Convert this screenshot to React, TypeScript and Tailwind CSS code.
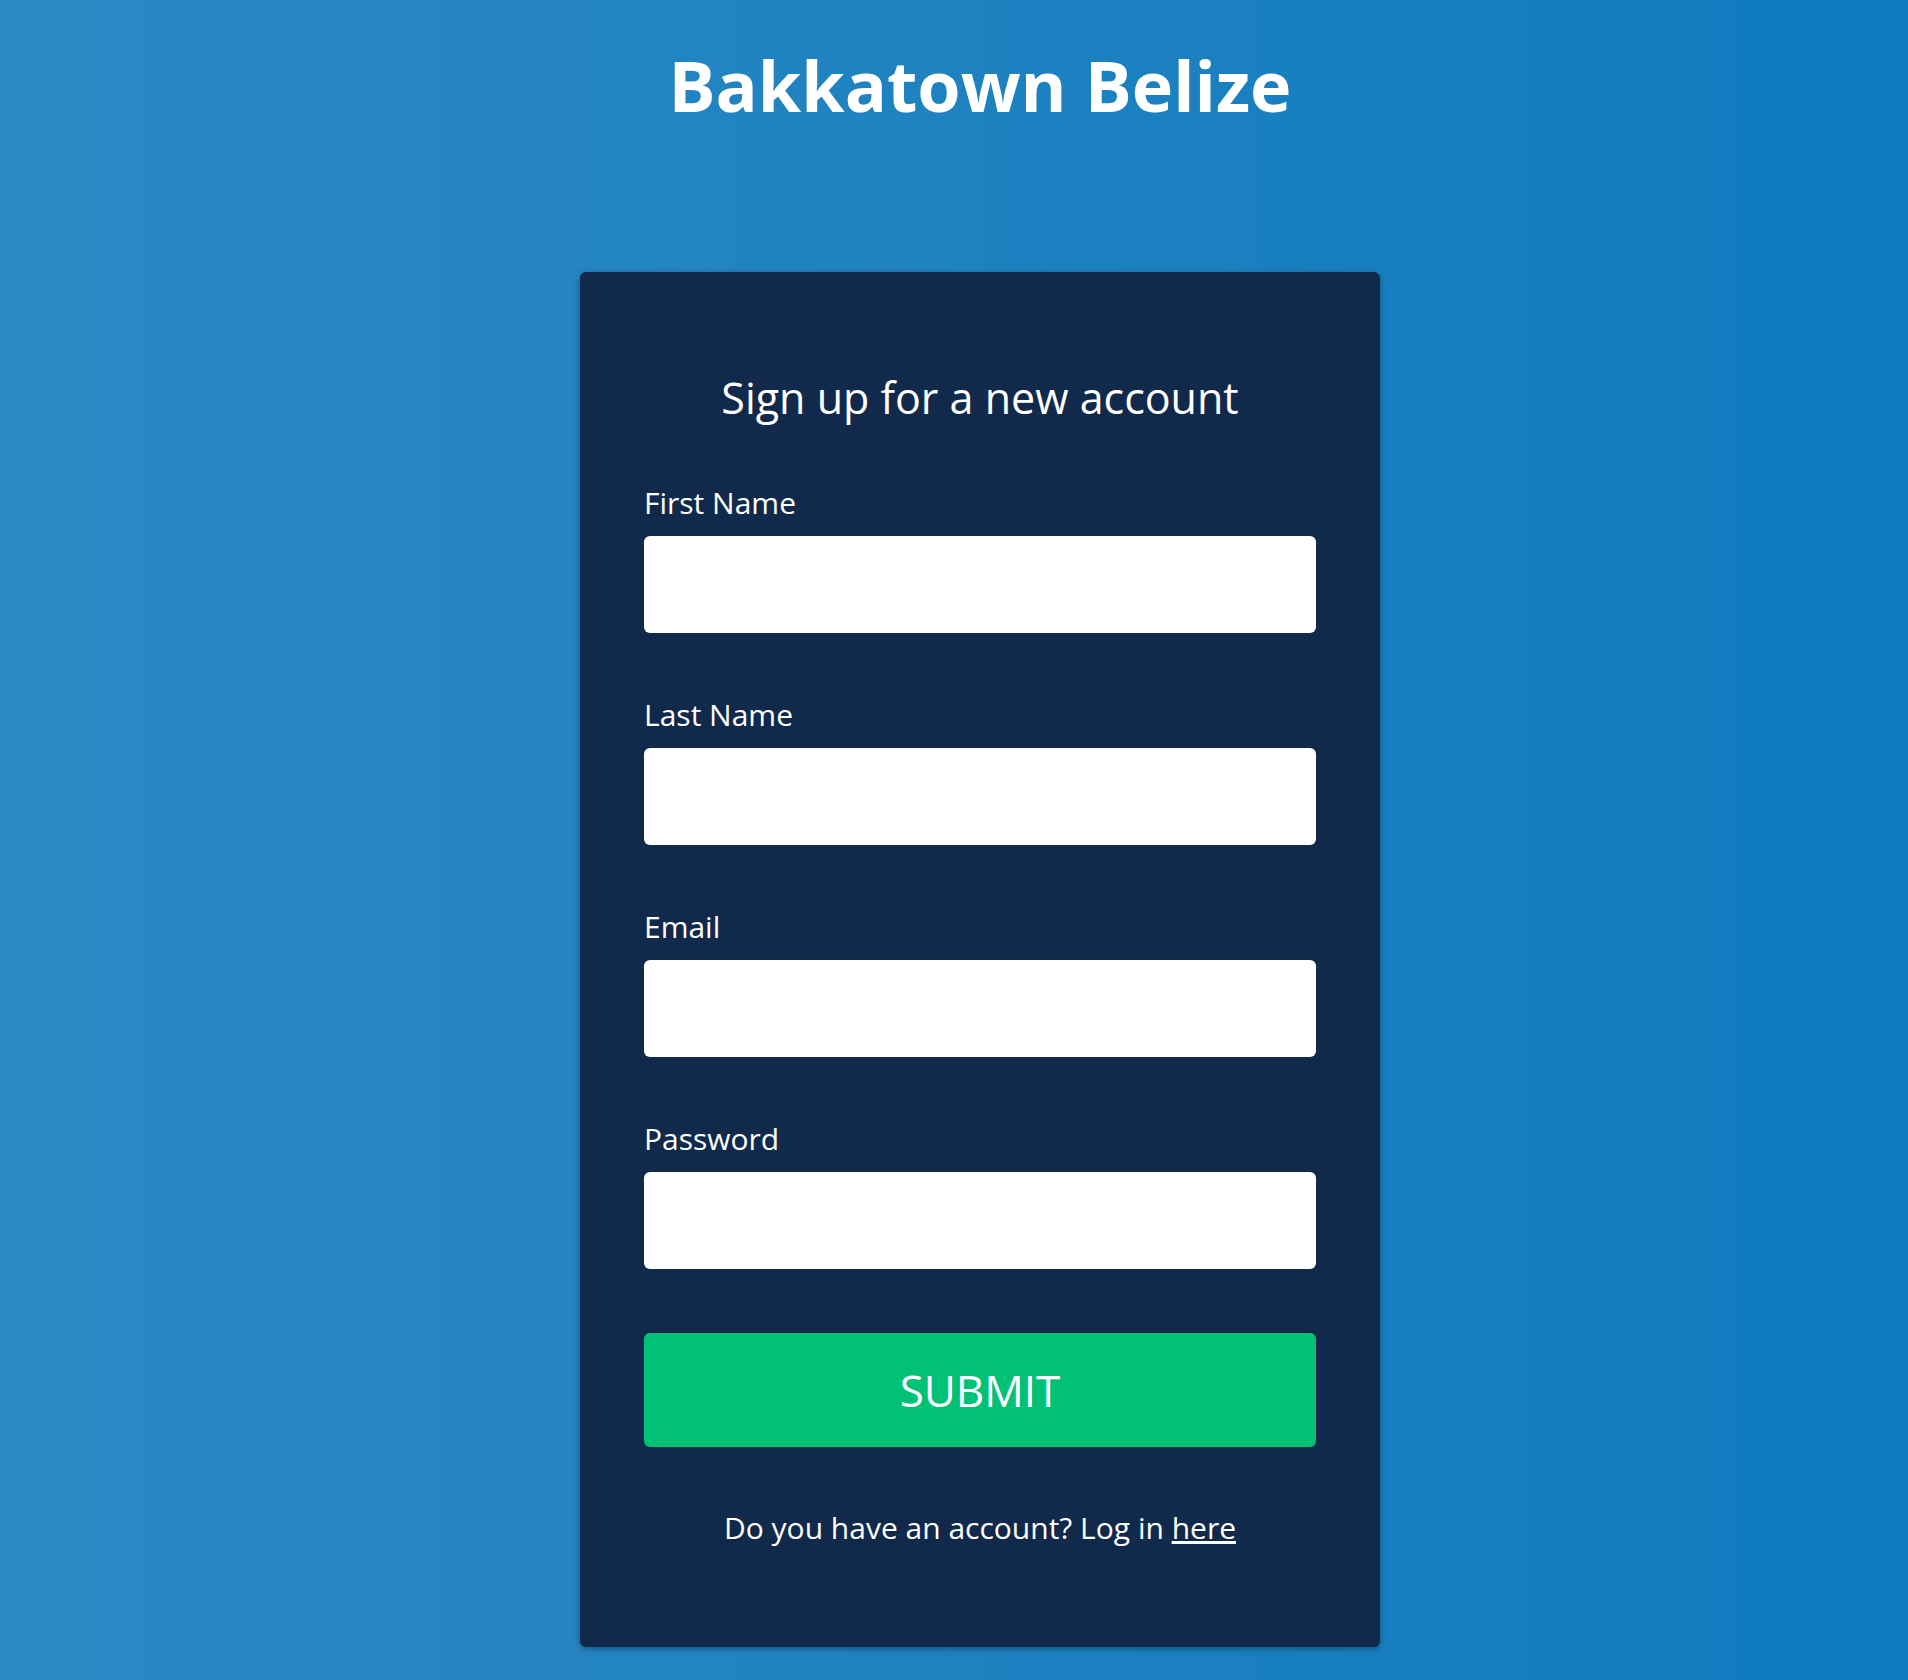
import React from 'react'

const fields = ['First Name', 'Last Name', 'Email', 'Password']

export default function App() {
  return (
    <div
      className="min-h-[1680px] w-full bg-gradient-to-r from-[#2b89c4] to-[#0c7bbe] pl-[52px] text-white"
      style={{ fontFamily: '"Open Sans", "Noto Sans", sans-serif' }}
    >
      <h1 className="pt-[50px] text-center text-[70px] font-bold leading-none">Bakkatown Belize</h1>

      <div className="mt-[152px] flex justify-center">
        <div className="w-[800px] rounded-md bg-[#112a4b] px-16 pt-[104px] pb-[101px] shadow-[0_2px_6px_rgba(0,0,0,0.35)]">
          <h2 className="text-center text-[43px] font-normal leading-none">Sign up for a new account</h2>

          <form className="mt-[66px]" onSubmit={(e) => e.preventDefault()}>
            {fields.map((label) => (
              <div key={label} className="mb-[64px]">
                <label className="mb-[15px] block text-[30px] leading-[36px]">{label}</label>
                <input
                  type={label === 'Password' ? 'password' : label === 'Email' ? 'email' : 'text'}
                  className="block h-[97px] w-full rounded-md bg-white px-4 text-[28px] text-gray-900 outline-none"
                />
              </div>
            ))}

            <button
              type="submit"
              className="mt-[1px] flex h-[114px] w-full items-center justify-center rounded-md bg-[#00c176] text-[44px] uppercase leading-none text-white"
            >
              Submit
            </button>
          </form>

          <p className="mt-[63px] text-center text-[30px] leading-[36px]">
            Do you have an account? Log in <a href="#" className="underline">here</a>
          </p>
        </div>
      </div>
    </div>
  )
}
